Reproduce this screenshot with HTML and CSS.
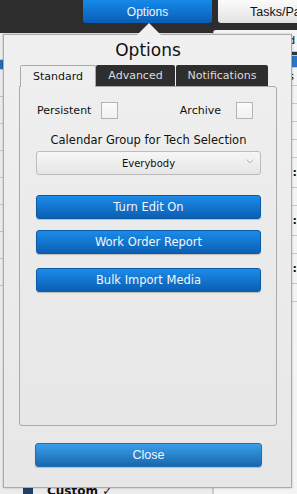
FILE: index.html
```html
<!DOCTYPE html>
<html>
<head>
<meta charset="utf-8">
<link rel="stylesheet" href="styles.css">
</head>
<body>
<div class="page">
  <header class="topbar">
    <div class="top-btn top-btn-active">Options</div>
    <div class="top-btn top-btn-light">Tasks/Parts</div>
  </header>
  <div class="content">
    <div class="leftcol">
      <div class="lrow"></div>
      <div class="lrow lrow-blue"></div>
      <div class="lrow"></div>
      <div class="lrow"></div>
      <div class="lrow"></div>
      <div class="lrow"></div>
      <div class="lrow"></div>
      <div class="lrow"></div>
      <div class="lrow"></div>
      <div class="lrow"></div>
      <div class="custom"><span class="sq"></span><span class="custom-txt">Custom ✓</span></div>
    </div>
    <div class="rightcol">
      <div class="rbox">
        <div class="rrow rrow-head">d</div>
        <div class="rrow rrow-dark"></div>
        <div class="rrow rrow-blue"></div>
        <div class="rrow">s</div>
        <div class="rrow"></div>
        <div class="rrow"></div>
        <div class="rrow"></div>
        <div class="rrow"></div>
        <div class="rrow rrow-dots">::</div>
        <div class="rrow"></div>
        <div class="rrow rrow-dots">::</div>
        <div class="rrow"></div>
        <div class="rrow rrow-dots">::</div>
        <div class="rrow"></div>
      </div>
    </div>
  </div>

  <div class="popup">
    <div class="popup-title">Options</div>
    <div class="tabs">
      <div class="tab tab-active">Standard</div>
      <div class="tab">Advanced</div>
      <div class="tab tab-notif">Notifications</div>
    </div>
    <div class="panel">
      <div class="checks">
        <label class="check"><span class="check-label">Persistent</span><span class="box"></span></label>
        <label class="check"><span class="check-label">Archive</span><span class="box"></span></label>
      </div>
      <div class="cal-label">Calendar Group for Tech Selection</div>
      <div class="select">Everybody
        <svg class="chev" width="8" height="5" viewBox="0 0 8 5"><path d="M0.5 0.5 L4 4 L7.5 0.5" fill="none" stroke="#b5b5b5" stroke-width="1"/></svg>
      </div>
      <div class="btn btn-first">Turn Edit On</div>
      <div class="btn btn-second">Work Order Report</div>
      <div class="btn btn-third">Bulk Import Media</div>
    </div>
    <div class="btn btn-close">Close</div>
  </div>
</div>
</body>
</html>
```
FILE: styles.css
```css
* { box-sizing: border-box; }
html, body { margin: 0; padding: 0; }
body {
  width: 297px;
  height: 494px;
  overflow: hidden;
  background: #ececec;
  font-family: "DejaVu Sans", sans-serif;
}
.page { position: relative; width: 297px; height: 494px; overflow: hidden; }

.topbar {
  height: 33px;
  background: #2d2d2d;
  display: flex;
  align-items: flex-start;
  padding-left: 83px;
  gap: 6px;
  overflow: hidden;
}
.top-btn {
  flex: none;
  height: 23px;
  border-radius: 0 0 3px 3px;
  font-family: "Liberation Sans", sans-serif;
  font-size: 12px;
  display: flex;
  align-items: center;
  justify-content: center;
  white-space: nowrap;
}
.top-btn-active {
  width: 129px;
  background: linear-gradient(#1689ea, #0a5db4);
  color: #f2f6fb;
}
.top-btn-light {
  width: 130px;
  background: linear-gradient(#fbfbfb, #e2e2e2);
  color: #111;
  justify-content: flex-start;
  padding-left: 32px;
  font-size: 12.5px;
}

.content { display: flex; height: 461px; }
.leftcol {
  width: 218px;
  display: flex;
  flex-direction: column;
  border-right: 1px solid #c8c8c8;
  background: #ececec;
}
.lrow { height: 27px; border-bottom: 1px solid #c4c4c4; width: 3px; }
.lrow-blue { background: #2a6ab0; height: 10px; }
.custom { margin-top: auto; height: 8px; display: flex; align-items: flex-start; padding-left: 23px; gap: 14px; }
.sq { width: 10px; height: 8px; background: #1f3f66; margin-top: 2px; }
.custom-txt { font-size: 12px; font-weight: bold; color: #111; line-height: 10px; }

.rightcol { flex: 1; background: #2d2d2d; }
.rbox {
  margin-top: -3px;
  background: #f4f4f4;
  border-left: 1px solid #ccc;
  border-radius: 3px 0 0 0;
  height: 464px;
  display: flex;
  flex-direction: column;
}
.rrow {
  height: 18px;
  border-bottom: 1px solid #c9c9c9;
  font-size: 11px;
  color: #111;
  padding-left: 74px;
  line-height: 18px;
  flex: none;
}
.rrow-head { height: 22px; line-height: 22px; }
.rrow-dark { height: 4px; background: #333; }
.rrow-blue { height: 12px; background: #2a76c8; }
.rrow-dots { font-weight: bold; height: 30px; line-height: 30px; }

/* popup */
.popup {
  position: absolute;
  left: 3px;
  top: 34px;
  width: 289px;
  height: 454px;
  background: linear-gradient(#f0f0f0, #e7e7e7);
  border: 1px solid #ababab;
  box-shadow: 0 0 2px rgba(0,0,0,0.25);
  display: flex;
  flex-direction: column;
  padding: 0 14px 0 15px;
}
.popup::before {
  content: "";
  position: absolute;
  left: 133px;
  top: -12px;
  width: 0;
  height: 0;
  border-left: 12px solid transparent;
  border-right: 12px solid transparent;
  border-bottom: 12px solid #f0f0f0;
}
.popup-title {
  height: 30px;
  font-size: 17px;
  color: #111;
  text-align: center;
  line-height: 28px;
  padding-top: 1px;
}
.tabs { display: flex; height: 21px; padding-left: 1px; }
.tab {
  height: 21px;
  background: #2e2e2e;
  color: #dcdcdc;
  font-size: 11px;
  display: flex;
  align-items: center;
  justify-content: center;
  width: 79px;
  border-radius: 2px 2px 0 0;
}
.tab-active {
  width: 76px;
  background: #efefef;
  color: #111;
  border: 1px solid #aaa;
  border-bottom: none;
  position: relative;
  z-index: 1;
  margin-bottom: -1px;
  height: 22px;
}
.tab-notif { width: 92px; margin-left: 1px; }

.panel {
  height: 340px;
  border: 1px solid #aaa;
  border-radius: 0 3px 3px 3px;
  background: linear-gradient(#eeeeee, #e7e7e7);
  display: flex;
  flex-direction: column;
  padding: 15px 15px 0 16px;
}
.checks { display: flex; justify-content: space-between; height: 17px; }
.check { display: flex; align-items: center; gap: 10px; }
.check-label { font-size: 11px; color: #111; }
.check:first-child { padding-left: 1px; }
.check:last-child { gap: 15px; margin-right: 8px; }
.box {
  width: 17px;
  height: 17px;
  border: 1px solid #b4b4b4;
  background: linear-gradient(#fbfbfb, #f1f1f1);
}
.cal-label {
  margin-top: 14px;
  font-size: 11.5px;
  color: #111;
  text-align: center;
  height: 15px;
  line-height: 15px;
}
.select {
  position: relative;
  margin-top: 3px;
  height: 24px;
  border: 1px solid #bcbcbc;
  border-radius: 3px;
  background: linear-gradient(#f6f6f6, #e6e6e6);
  font-size: 10px;
  color: #111;
  text-align: center;
  line-height: 23px;
}
.chev { position: absolute; right: 6px; top: 7px; }

.btn {
  height: 24px;
  border-radius: 3px;
  background: linear-gradient(#1c8bea, #0b5fb2);
  border: 1px solid #0c5aa6;
  color: #f3f6fa;
  font-size: 11.5px;
  display: flex;
  align-items: center;
  justify-content: center;
  box-shadow: 0 1px 1px rgba(0,0,0,0.2);
}
.btn-first { margin-top: 20px; }
.btn-second { margin-top: 11px; }
.btn-third { margin-top: 14px; }
.btn-close {
  margin: 17px 15px 0 16px;
  background: linear-gradient(#3a9fea, #1868ad);
  border-color: #1f6fb5;
  font-family: "Liberation Sans", sans-serif;
  font-size: 12.5px;
}
```
